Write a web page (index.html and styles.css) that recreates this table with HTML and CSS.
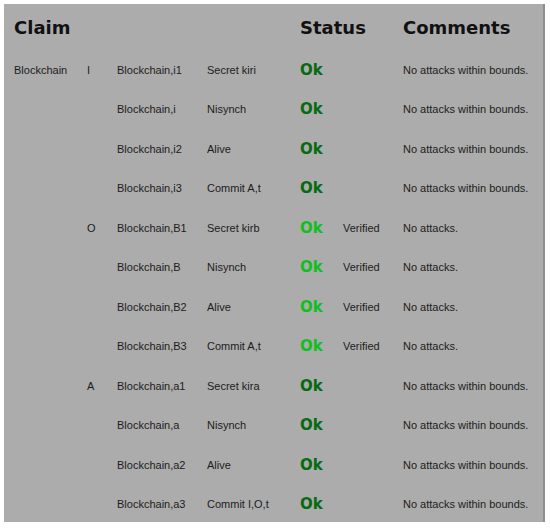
FILE: index.html
```html
<!DOCTYPE html>
<html>
<head>
<meta charset="utf-8">
<link rel="stylesheet" href="styles.css">
</head>
<body>
<div class="panel">
  <div class="grid">
    <div class="h claim">Claim</div>
    <div class="h status">Status</div>
    <div class="h comments">Comments</div>

    <div class="c">Blockchain</div><div class="c">I</div><div class="c">Blockchain,i1</div><div class="c">Secret kiri</div><div class="c ok">Ok</div><div class="c"></div><div class="c">No attacks within bounds.</div>
    <div class="c"></div><div class="c"></div><div class="c">Blockchain,i</div><div class="c">Nisynch</div><div class="c ok">Ok</div><div class="c"></div><div class="c">No attacks within bounds.</div>
    <div class="c"></div><div class="c"></div><div class="c">Blockchain,i2</div><div class="c">Alive</div><div class="c ok">Ok</div><div class="c"></div><div class="c">No attacks within bounds.</div>
    <div class="c"></div><div class="c"></div><div class="c">Blockchain,i3</div><div class="c">Commit A,t</div><div class="c ok">Ok</div><div class="c"></div><div class="c">No attacks within bounds.</div>

    <div class="c"></div><div class="c">O</div><div class="c">Blockchain,B1</div><div class="c">Secret kirb</div><div class="c ok v">Ok</div><div class="c">Verified</div><div class="c">No attacks.</div>
    <div class="c"></div><div class="c"></div><div class="c">Blockchain,B</div><div class="c">Nisynch</div><div class="c ok v">Ok</div><div class="c">Verified</div><div class="c">No attacks.</div>
    <div class="c"></div><div class="c"></div><div class="c">Blockchain,B2</div><div class="c">Alive</div><div class="c ok v">Ok</div><div class="c">Verified</div><div class="c">No attacks.</div>
    <div class="c"></div><div class="c"></div><div class="c">Blockchain,B3</div><div class="c">Commit A,t</div><div class="c ok v">Ok</div><div class="c">Verified</div><div class="c">No attacks.</div>

    <div class="c"></div><div class="c">A</div><div class="c">Blockchain,a1</div><div class="c">Secret kira</div><div class="c ok">Ok</div><div class="c"></div><div class="c">No attacks within bounds.</div>
    <div class="c"></div><div class="c"></div><div class="c">Blockchain,a</div><div class="c">Nisynch</div><div class="c ok">Ok</div><div class="c"></div><div class="c">No attacks within bounds.</div>
    <div class="c"></div><div class="c"></div><div class="c">Blockchain,a2</div><div class="c">Alive</div><div class="c ok">Ok</div><div class="c"></div><div class="c">No attacks within bounds.</div>
    <div class="c"></div><div class="c"></div><div class="c">Blockchain,a3</div><div class="c">Commit I,O,t</div><div class="c ok">Ok</div><div class="c"></div><div class="c">No attacks within bounds.</div>
  </div>
</div>
</body>
</html>
```

FILE: styles.css
```css
html, body {
  margin: 0;
  padding: 0;
  background: #ffffff;
}
.panel {
  margin: 4px 0 0 4px;
  width: 539px;
  height: 518px;
  background: #acacac;
  border-right: 2px solid #8e8e8e;
  overflow: hidden;
  box-sizing: content-box;
}
.grid {
  display: grid;
  grid-template-columns: 10px 73px 30px 90px 93px 43px 60px 1fr;
  grid-template-rows: 46px repeat(12, 39.5px);
  align-items: center;
  font-family: "Liberation Sans", Arial, sans-serif;
  font-size: 11px;
  color: #1c1c1c;
}
.grid > .c:nth-child(7n + 4) {
  grid-column-start: 2;
}
.h {
  font-family: "DejaVu Sans", sans-serif;
  font-weight: bold;
  font-size: 18px;
  color: #111;
}
.claim { grid-column: 2 / 6; }
.status { grid-column: 6 / 8; }
.comments { grid-column: 8 / 9; }
.ok {
  font-family: "DejaVu Sans", sans-serif;
  font-weight: bold;
  font-size: 15px;
  color: #066a10;
}
.ok.v {
  color: #10bf1e;
}
```
